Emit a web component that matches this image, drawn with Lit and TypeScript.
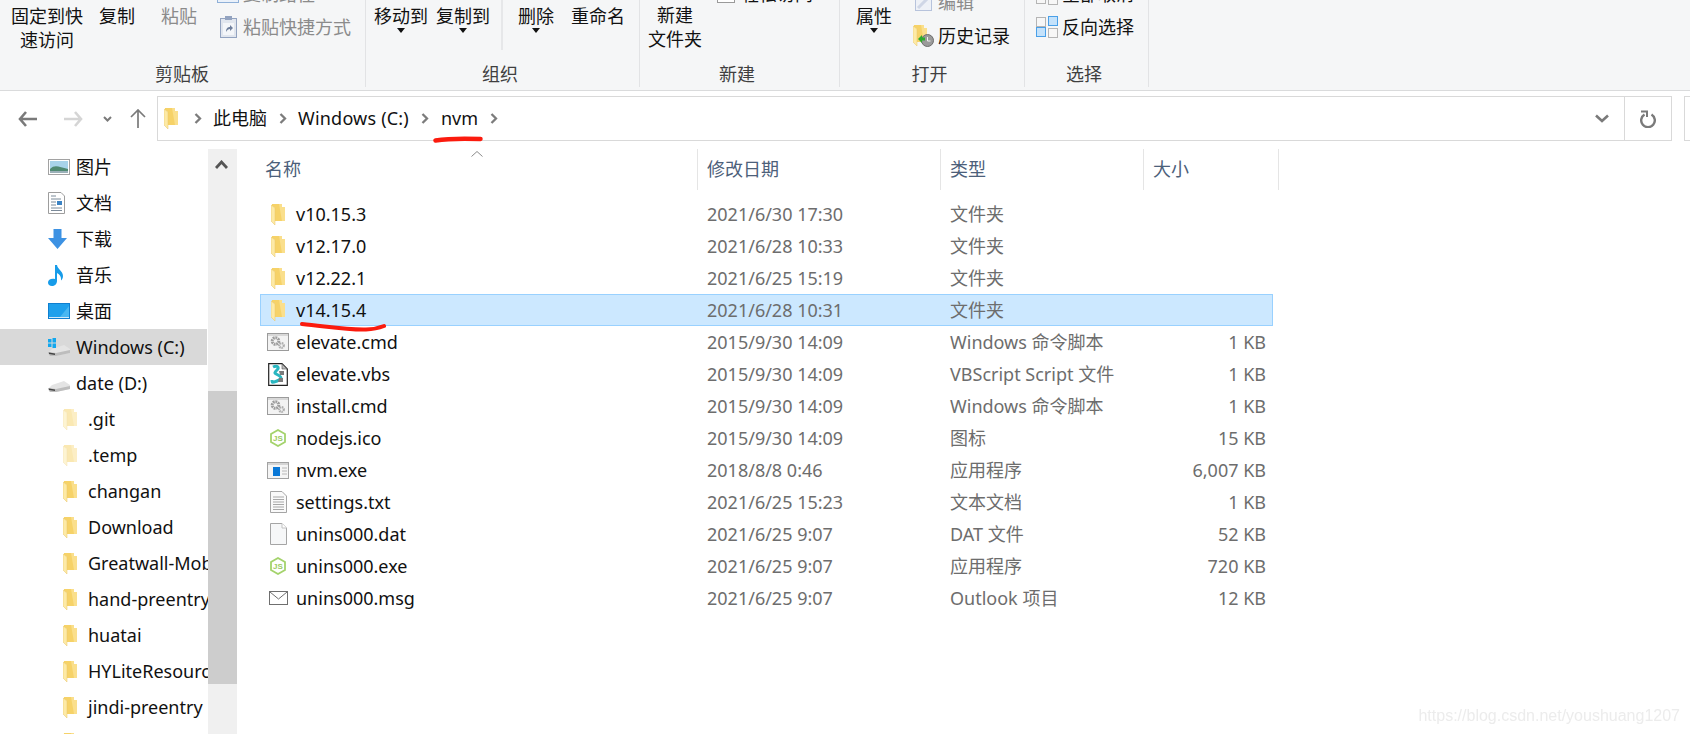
import { LitElement, html, css, svg } from 'lit';
import { customElement } from 'lit/decorators.js';

const folderGlyph = svg`
  <path d="M1 0H11V3H14V17H4V4L1 2Z" fill="#f6d268"/>
  <path d="M8 0H11V3H14V17H11Z" fill="#fadf8c"/>
  <path d="M0 1L4 4V21L0 17Z" fill="#fdeaa6"/>
  <path d="M0 1L4 4V21L0 17Z" fill="none" stroke="#e8c468" stroke-width=".5"/>`;

const folder = (cls = '') => html`<svg class="folder ${cls}" width="14" height="21" viewBox="0 0 14 21">${folderGlyph}</svg>`;

const gears = svg`
  <circle cx="8.500" cy="8" r="3.300" fill="none" stroke="#9c9c9c" stroke-width="3" stroke-dasharray="1.800 .7"/>
  <circle cx="14.500" cy="12.500" r="2.300" fill="none" stroke="#aeaeae" stroke-width="2.200" stroke-dasharray="1.400 .6"/>`;

const cmdIcon = html`<svg width="22" height="18" viewBox="0 0 22 18">
  <rect x=".5" y=".5" width="21" height="17" fill="#f3f3f3" stroke="#9b9b9b"/>
  <path d="M1 1H21V3H1Z" fill="#d8d8d8"/>${gears}</svg>`;

const vbsIcon = html`<svg width="20" height="23" viewBox="0 0 20 23">
  <path d="M.7.7H14L19.300 6V22.300H.7Z" fill="#fff" stroke="#222" stroke-width="1.200"/>
  <path d="M14 1V6H19Z" fill="#bbb" stroke="#555" stroke-width=".6"/>
  <path d="M5 4C9 2 12 4 9 7S6 10 10 12 14 16 9 18 4 20 4 17" fill="none" stroke="#29b6c0" stroke-width="3"/>
  <path d="M11 8H16V12H12ZM11 15H15V19H10Z" fill="#7a7a7a"/></svg>`;

const nodeIcon = html`<svg width="16" height="18" viewBox="0 0 16 18">
  <path d="M8 1L15 5V13L8 17L1 13V5Z" fill="#fff" stroke="#a4d36c" stroke-width="1.800"/>
  <text x="8" y="12" text-anchor="middle" font-size="8" font-family="Liberation Sans" font-weight="700" fill="#9ccb62">JS</text></svg>`;

const exeIcon = html`<svg width="22" height="17" viewBox="0 0 22 17">
  <rect x=".5" y=".5" width="21" height="16" fill="#f5f5f5" stroke="#a2a2a2"/>
  <path d="M1 1H21V3H1Z" fill="#d5d5d5"/>
  <rect x="6" y="5" width="7" height="9" fill="#0a78d7"/>
  <path d="M15 6H20M15 9H20M15 12H20" stroke="#b8b8b8"/></svg>`;

const txtIcon = html`<svg width="17" height="22" viewBox="0 0 17 22">
  <path d="M.5.5H12L16.500 5V21.500H.5Z" fill="#fafafa" stroke="#a5a5a5"/>
  <path d="M3 6H14M3 8.500H14M3 11H14M3 13.500H14M3 16H14M3 18.500H14" stroke="#a8a8a8"/></svg>`;

const datIcon = html`<svg width="17" height="22" viewBox="0 0 17 22">
  <path d="M.5.5H12L16.500 5V21.500H.5Z" fill="#f6f7f8" stroke="#a5a5a5"/>
  <path d="M12 .5V5H16.500" fill="#fff" stroke="#c2c2c2"/></svg>`;

const mailIcon = html`<svg width="19" height="14" viewBox="0 0 19 14">
  <rect x=".5" y=".5" width="18" height="13" fill="#fff" stroke="#6f6f6f"/>
  <path d="M1 1L9.500 8L18 1" fill="none" stroke="#6f6f6f"/></svg>`;

const files = [
  { name: 'v10.15.3', date: '2021/6/30 17:30', type: '文件夹', size: '', icon: folder() },
  { name: 'v12.17.0', date: '2021/6/28 10:33', type: '文件夹', size: '', icon: folder() },
  { name: 'v12.22.1', date: '2021/6/25 15:19', type: '文件夹', size: '', icon: folder() },
  { name: 'v14.15.4', date: '2021/6/28 10:31', type: '文件夹', size: '', icon: folder(), selected: true },
  { name: 'elevate.cmd', date: '2015/9/30 14:09', type: 'Windows 命令脚本', size: '1 KB', icon: cmdIcon },
  { name: 'elevate.vbs', date: '2015/9/30 14:09', type: 'VBScript Script 文件', size: '1 KB', icon: vbsIcon },
  { name: 'install.cmd', date: '2015/9/30 14:09', type: 'Windows 命令脚本', size: '1 KB', icon: cmdIcon },
  { name: 'nodejs.ico', date: '2015/9/30 14:09', type: '图标', size: '15 KB', icon: nodeIcon },
  { name: 'nvm.exe', date: '2018/8/8 0:46', type: '应用程序', size: '6,007 KB', icon: exeIcon },
  { name: 'settings.txt', date: '2021/6/25 15:23', type: '文本文档', size: '1 KB', icon: txtIcon },
  { name: 'unins000.dat', date: '2021/6/25 9:07', type: 'DAT 文件', size: '52 KB', icon: datIcon },
  { name: 'unins000.exe', date: '2021/6/25 9:07', type: '应用程序', size: '720 KB', icon: nodeIcon },
  { name: 'unins000.msg', date: '2021/6/25 9:07', type: 'Outlook 项目', size: '12 KB', icon: mailIcon },
];

const driveBody = svg`
  <path d="M4 11L16 7L22 11V15L8 18H2L0 15Z" fill="#e4e4e4"/>
  <path d="M0 14L8 15L22 12V15L8 18H2L0 15Z" fill="#bdbdbd"/>
  <path d="M1 14.500L7 15.500V17L1 16Z" fill="#444"/>`;

const quick = [
  { name: '图片', icon: html`<svg width="22" height="16" viewBox="0 0 22 16">
    <rect x=".5" y=".5" width="21" height="15" fill="#fff" stroke="#a2a2a2"/>
    <rect x="2" y="2" width="18" height="12" fill="#a7d3ea"/>
    <path d="M2 10C7 5 11 8 20 10V14H2Z" fill="#4f8a72"/><path d="M2 12H20V14H2Z" fill="#9ab0b8"/></svg>` },
  { name: '文档', icon: html`<svg width="17" height="22" viewBox="0 0 17 22">
    <path d="M.5.5H13L16.500 4V21.500H.5Z" fill="#fff" stroke="#9d9d9d"/>
    <path d="M3 4H8M3 7H13M3 10H8M3 13H8M3 16H14M3 18.500H14" stroke="#7b8a99"/>
    <rect x="9" y="9" width="5" height="4" fill="#3b83c4"/></svg>` },
  { name: '下载', icon: html`<svg width="19" height="20" viewBox="0 0 19 20">
    <path d="M5.500 0H13.500V9H19L9.500 20L0 9H5.500Z" fill="#3d92e3"/></svg>` },
  { name: '音乐', icon: html`<svg width="16" height="21" viewBox="0 0 16 21">
    <path d="M7 0H9C9.500 4 15 6 15 11C15 13 14 14.500 13 15.500C13.500 11 11 9 9 8V16C9 19 6.500 21 4 21C1.500 21 0 19.500 0 17.500C0 15 3 13 7 14Z" fill="#179ce9"/></svg>` },
  { name: '桌面', icon: html`<svg width="22" height="16" viewBox="0 0 22 16">
    <rect width="22" height="16" fill="#0f7fd0"/><rect x="1" y="1" width="20" height="13" fill="#1ea0ec"/>
    <path d="M12 14L21 3V14Z" fill="#48b7f2"/><path d="M1 14.500H21" stroke="#cfe9fa"/></svg>` },
  { name: 'Windows (C:)', selected: true, icon: html`<svg width="22" height="18" viewBox="0 0 22 18">
    ${driveBody}<path d="M0 1H3.500V4.500H0ZM4.500 0H8V4.500H4.500ZM0 5.500H3.500V9H0ZM4.500 5.500H8V10H4.500Z" fill="#12a7ee"/></svg>` },
  { name: 'date (D:)', icon: html`<svg width="22" height="18" viewBox="0 0 22 18">${driveBody}</svg>` },
];

const tree = ['.git', '.temp', 'changan', 'Download', 'Greatwall-Mobile', 'hand-preentry', 'huatai', 'HYLiteResource', 'jindi-preentry', 'jinke'];

const chev = (cls = '') => html`<svg class="chev ${cls}" width="8" height="11" viewBox="0 0 8 11"><path d="M1.500 1L6 5.500L1.500 10" fill="none" stroke="#7c7c7c" stroke-width="2.300"/></svg>`;

@customElement('app-root')
export class AppRoot extends LitElement {
  static styles = css`
    :host {
      display: block;
      position: relative;
      width: 1690px;
      height: 734px;
      overflow: hidden;
      background: #fff;
      color: #111;
      font: 18px/24px "Noto Sans", "Noto Sans CJK SC", sans-serif;
    }
    svg { display: block; flex: none; }

    /* ribbon */
    .ribbon { display: flex; height: 90px; background: #f5f6f7; border-bottom: 1px solid #dadbdc; overflow: hidden; }
    .group { box-sizing: border-box; height: 87px; border-right: 1px solid #e2e3e5; display: flex; flex-direction: column; }
    .g-clip { width: 366px; }
    .g-org { width: 274px; }
    .g-new { width: 200px; }
    .g-open { width: 185px; }
    .g-sel { width: 124px; }
    .body { height: 62px; display: flex; align-items: flex-start; padding-top: 4px; box-sizing: border-box; }
    .label { text-align: center; color: #3f3f3f; padding-right: 5px; }
    .g-clip .label { padding-right: 1px; }
    .big { text-align: center; display: flex; flex-direction: column; align-items: center; white-space: nowrap; }
    .g-new .big { margin-top: -1px; }
    .caret { width: 0; height: 0; border: 4px solid transparent; border-top: 5px solid #111; border-bottom: 0; }
    .gray { color: #8b8b8b; }
    .stack { display: flex; flex-direction: column; flex: none; white-space: nowrap; }
    .stack-a { margin-top: -27px; }
    .stack-b { margin-top: -19px; }
    .stack-row { height: 33px; display: flex; align-items: center; gap: 3px; }
    .stack-b .stack-row { height: 34px; }
    .stack-b .stack-row .ico { margin-left: -2px; }
    .ico { width: 24px; display: flex; justify-content: center; }
    .vsep { width: 2px; height: 50px; margin-top: -4px; background: #e6e7e9; flex: none; }
    .ml8 { margin-left: 8px; } .ml10 { margin-left: 10px; } .ml11 { margin-left: 11px; }
    .ml12 { margin-left: 12px; } .ml15 { margin-left: 15px; } .ml16 { margin-left: 16px; }
    .ml17 { margin-left: 17px; } .ml19 { margin-left: 19px; } .ml21 { margin-left: 21px; } .ml26 { margin-left: 26px; }

    /* address row */
    .nav { display: flex; align-items: flex-start; height: 58px; padding: 5px 0 0 18px; box-sizing: border-box; }
    .nav > svg { margin-top: 15px; }
    .nav > .arrow-drop { margin-top: 20px; }
    .nav > .arrow-up { margin-top: 13px; }
    .arrow-fwd { margin-left: 27px; }
    .arrow-drop { margin-left: 20px; }
    .arrow-up { margin-left: 18px; }
    .address {
      position: relative; box-sizing: border-box; width: 1515px; height: 45px; margin-left: 11px; flex: none;
      border: 1px solid #d9d9d9; display: flex; align-items: center; padding-left: 6px;
    }
    .crumb { margin-left: 11px; white-space: nowrap; margin-top: -1px; }
    .crumb.wide { letter-spacing: .2px; }
    .crumb.last { margin-left: 12px; }
    .chev { margin-left: 12px; }
    .chev.first { margin-left: 16px; }
    .addr-drop { margin-left: auto; }
    .addr-refresh { width: 46px; height: 100%; margin-left: 15px; border-left: 1px solid #d9d9d9; display: flex; align-items: center; justify-content: center; }
    .search { box-sizing: border-box; height: 45px; width: 40px; margin-left: 12px; border: 1px solid #d9d9d9; flex: none; }
    .mark { position: absolute; pointer-events: none; }
    .mark-nvm { left: 275px; top: 39px; }
    .mark-row { left: 39px; top: 27px; }

    /* columns */
    .columns { display: flex; height: 585px; }
    .side { width: 208px; flex: none; overflow: hidden; }
    .side-row { height: 36px; display: flex; align-items: center; white-space: nowrap; overflow: hidden; }
    .side-row.on { background: #d9d9d9; width: 207px; }
    .side-ico { width: 29px; margin-left: 47px; flex: none; display: flex; justify-content: flex-start; padding-left: 1px; box-sizing: border-box; }
    .side-row .folder { margin-left: 63px; margin-right: 11px; }
    .faded { opacity: .5; }

    .scroll { width: 29px; flex: none; background: #f0f0f0; }
    .scroll-up { height: 242px; padding: 11px 0 0 7px; box-sizing: border-box; }
    .scroll-thumb { height: 293px; background: #cdcdcd; }

    .files { flex: 1; min-width: 0; }
    .head { display: grid; grid-template-columns: 443px 243px 203px 135px; height: 41px; margin-left: 18px; position: relative; }
    .head div { border-right: 1px solid #e5e5e5; padding: 8px 0 0 9px; color: #4c607a; }
    .head div:first-of-type { padding-left: 10px; }
    .sort { position: absolute; left: 216px; top: 2px; }
    .rows { margin: 8px 0 0 23px; width: 1013px; }
    .row {
      position: relative; box-sizing: border-box; height: 32px; border: 1px solid transparent;
      display: grid; grid-template-columns: 446px 243px 193px 123px; align-items: center; white-space: nowrap;
    }
    .row.on { background: #cce8ff; border-color: #99d1ff; }
    .name { display: flex; align-items: center; }
    .file-ico { width: 22px; margin: 0 7px 0 6px; display: flex; justify-content: center; flex: none; }
    .meta { color: #6d6d6d; }
    .size { text-align: right; }

    .watermark {
      position: absolute; right: 10px; bottom: 6px; color: #ececec; filter: blur(.4px);
      font: 16px/24px "Liberation Sans", sans-serif;
    }
  `;

  render() {
    return html`
      <div class="ribbon">
        <div class="group g-clip">
          <div class="body">
            <div class="big ml11">固定到快<br />速访问</div>
            <div class="big ml16">复制</div>
            <div class="big ml26 gray">粘贴</div>
            <div class="stack stack-a ml19">
              <div class="stack-row gray"><span class="ico"><svg width="22" height="18" viewBox="0 0 22 18"><rect x=".5" y=".5" width="21" height="17" fill="#eaf1fa" stroke="#8fb0d8"/></svg></span>复制路径</div>
              <div class="stack-row gray"><span class="ico"><svg width="17" height="22" viewBox="0 0 17 22">
                <rect x=".5" y="2.500" width="16" height="19" fill="#e1e6ee" stroke="#93a3c0"/>
                <rect x="5" y="0" width="7" height="4" fill="#93a3c0"/>
                <rect x="3" y="7" width="11" height="12" fill="#f4f6f9"/>
                <path d="M6 16C6 12 8 11 10 11V9L13 12L10 15V13C8.500 13 7 14 6 16Z" fill="#6f7f9c"/></svg></span>粘贴快捷方式</div>
            </div>
          </div>
          <div class="label">剪贴板</div>
        </div>
        <div class="group g-org">
          <div class="body">
            <div class="big ml8">移动到<span class="caret"></span></div>
            <div class="big ml8">复制到<span class="caret"></span></div>
            <span class="vsep ml11"></span>
            <div class="big ml15">删除<span class="caret"></span></div>
            <div class="big ml17">重命名</div>
          </div>
          <div class="label">组织</div>
        </div>
        <div class="group g-new">
          <div class="body">
            <div class="big ml8">新建<br />文件夹</div>
            <div class="stack stack-a ml12">
              <div class="stack-row"><span class="ico"><svg width="18" height="18" viewBox="0 0 18 18"><rect x=".5" y=".5" width="17" height="17" fill="#fff" stroke="#9a9a9a"/></svg></span>轻松访问</div>
            </div>
          </div>
          <div class="label">新建</div>
        </div>
        <div class="group g-open">
          <div class="body">
            <div class="big ml16">属性<span class="caret"></span></div>
            <div class="stack stack-b ml21">
              <div class="stack-row gray"><span class="ico"><svg width="17" height="17" viewBox="0 0 17 17"><rect x=".5" y=".5" width="16" height="16" fill="#eef1f7" stroke="#b7c3dc"/><path d="M3 14L14 3" stroke="#cfd6e6" stroke-width="3"/></svg></span>编辑</div>
              <div class="stack-row"><span class="ico"><svg width="21" height="22" viewBox="0 0 21 22">
                ${folderGlyph}
                <circle cx="14.500" cy="15.500" r="6" fill="#9a9a9a" stroke="#6d6d6d"/>
                <path d="M14.500 12V16H17.500" fill="none" stroke="#eee"/>
                <path d="M5 14L9 10V12.500H12V15.500H9V18Z" fill="#2eab2e"/></svg></span>历史记录</div>
            </div>
          </div>
          <div class="label">打开</div>
        </div>
        <div class="group g-sel">
          <div class="body">
            <div class="stack stack-a ml10">
              <div class="stack-row"><span class="ico">${this.selectIcon(false)}</span>全部取消</div>
              <div class="stack-row"><span class="ico">${this.selectIcon(true)}</span>反向选择</div>
            </div>
          </div>
          <div class="label">选择</div>
        </div>
      </div>

      <div class="nav">
        <svg width="19" height="16" viewBox="0 0 19 16"><path d="M8 1L2 8L8 15M2 8H19" fill="none" stroke="#7a7a7a" stroke-width="2.600"/></svg>
        <svg class="arrow-fwd" width="19" height="16" viewBox="0 0 19 16"><path d="M11 1L17 8L11 15M17 8H0" fill="none" stroke="#d5d5d5" stroke-width="2.600"/></svg>
        <svg class="arrow-drop" width="9" height="6" viewBox="0 0 9 6"><path d="M1 1L4.500 4.500L8 1" fill="none" stroke="#7a7a7a" stroke-width="2"/></svg>
        <svg class="arrow-up" width="16" height="19" viewBox="0 0 16 19"><path d="M1 8L8 1L15 8M8 1V19" fill="none" stroke="#7a7a7a" stroke-width="1.700"/></svg>
        <div class="address">
          ${folder()}
          ${chev('first')}
          <span class="crumb">此电脑</span>${chev()}
          <span class="crumb wide">Windows (C:)</span>${chev()}
          <span class="crumb last">nvm</span>${chev()}
          <svg class="addr-drop" width="14" height="9" viewBox="0 0 14 9"><path d="M1 1.500L7 7L13 1.500" fill="none" stroke="#7a7a7a" stroke-width="2.600"/></svg>
          <div class="addr-refresh">
            <svg width="16" height="18" viewBox="0 0 16 18"><path d="M4.500 4.500A6.800 6.800 0 1 0 11.500 4.500" fill="none" stroke="#7a7a7a" stroke-width="2.400"/><path d="M1 1.500H7V7" fill="none" stroke="#7a7a7a" stroke-width="2"/></svg>
          </div>
          <svg class="mark mark-nvm" width="50" height="7" viewBox="0 0 50 7"><path d="M2.500 4.500C15 2.500 35 2.500 47.500 3" fill="none" stroke="#fb1b0e" stroke-width="4.500" stroke-linecap="round"/></svg>
        </div>
        <div class="search"></div>
      </div>

      <div class="columns">
        <div class="side">
          ${quick.map(q => html`
            <div class="side-row ${q.selected ? 'on' : ''}"><span class="side-ico">${q.icon}</span>${q.name}</div>`)}
          ${tree.map(t => html`
            <div class="side-row">${folder(t === '.temp' || t === '.git' ? 'faded' : '')}${t}</div>`)}
        </div>
        <div class="scroll">
          <div class="scroll-up"><svg width="13" height="9" viewBox="0 0 13 9"><path d="M1 8L6.500 2L12 8" fill="none" stroke="#555" stroke-width="2.800"/></svg></div>
          <div class="scroll-thumb"></div>
        </div>
        <div class="files">
          <div class="head">
            <div>名称</div><div>修改日期</div><div>类型</div><div>大小</div>
            <svg class="sort" width="12" height="6" viewBox="0 0 12 6"><path d="M.5 5.500L6 .5L11.500 5.500" fill="none" stroke="#8a8a8a"/></svg>
          </div>
          <div class="rows">
            ${files.map(f => html`
              <div class="row ${f.selected ? 'on' : ''}">
                <div class="name"><span class="file-ico">${f.icon}</span>${f.name}</div>
                <div class="meta">${f.date}</div>
                <div class="meta">${f.type}</div>
                <div class="meta size">${f.size}</div>
                ${f.selected ? html`<svg class="mark mark-row" width="86" height="10" viewBox="0 0 86 10"><path d="M2 2C25 4 45 8 66 7.500C74 7.300 79 6 84 4" fill="none" stroke="#fb1b0e" stroke-width="4" stroke-linecap="round"/></svg>` : ''}
              </div>`)}
          </div>
        </div>
      </div>
      <div class="watermark">https://blog.csdn.net/youshuang1207</div>
    `;
  }

  selectIcon(blue: boolean) {
    const a = blue ? '#c4e2fb' : '#f7f7f7';
    const s = blue ? '#4aa0e8' : '#b5b5b5';
    return html`<svg width="22" height="22" viewBox="0 0 22 22">
      <rect x=".5" y="1.500" width="9" height="9" fill="#f7f7f7" stroke="#b5b5b5"/>
      <rect x="12.500" y=".5" width="9" height="9" fill="${a}" stroke="${s}"/>
      <rect x=".5" y="11.500" width="9" height="9" fill="${a}" stroke="${s}"/>
      <rect x="12.500" y="12.500" width="9" height="9" fill="#f7f7f7" stroke="#b5b5b5"/></svg>`;
  }
}
